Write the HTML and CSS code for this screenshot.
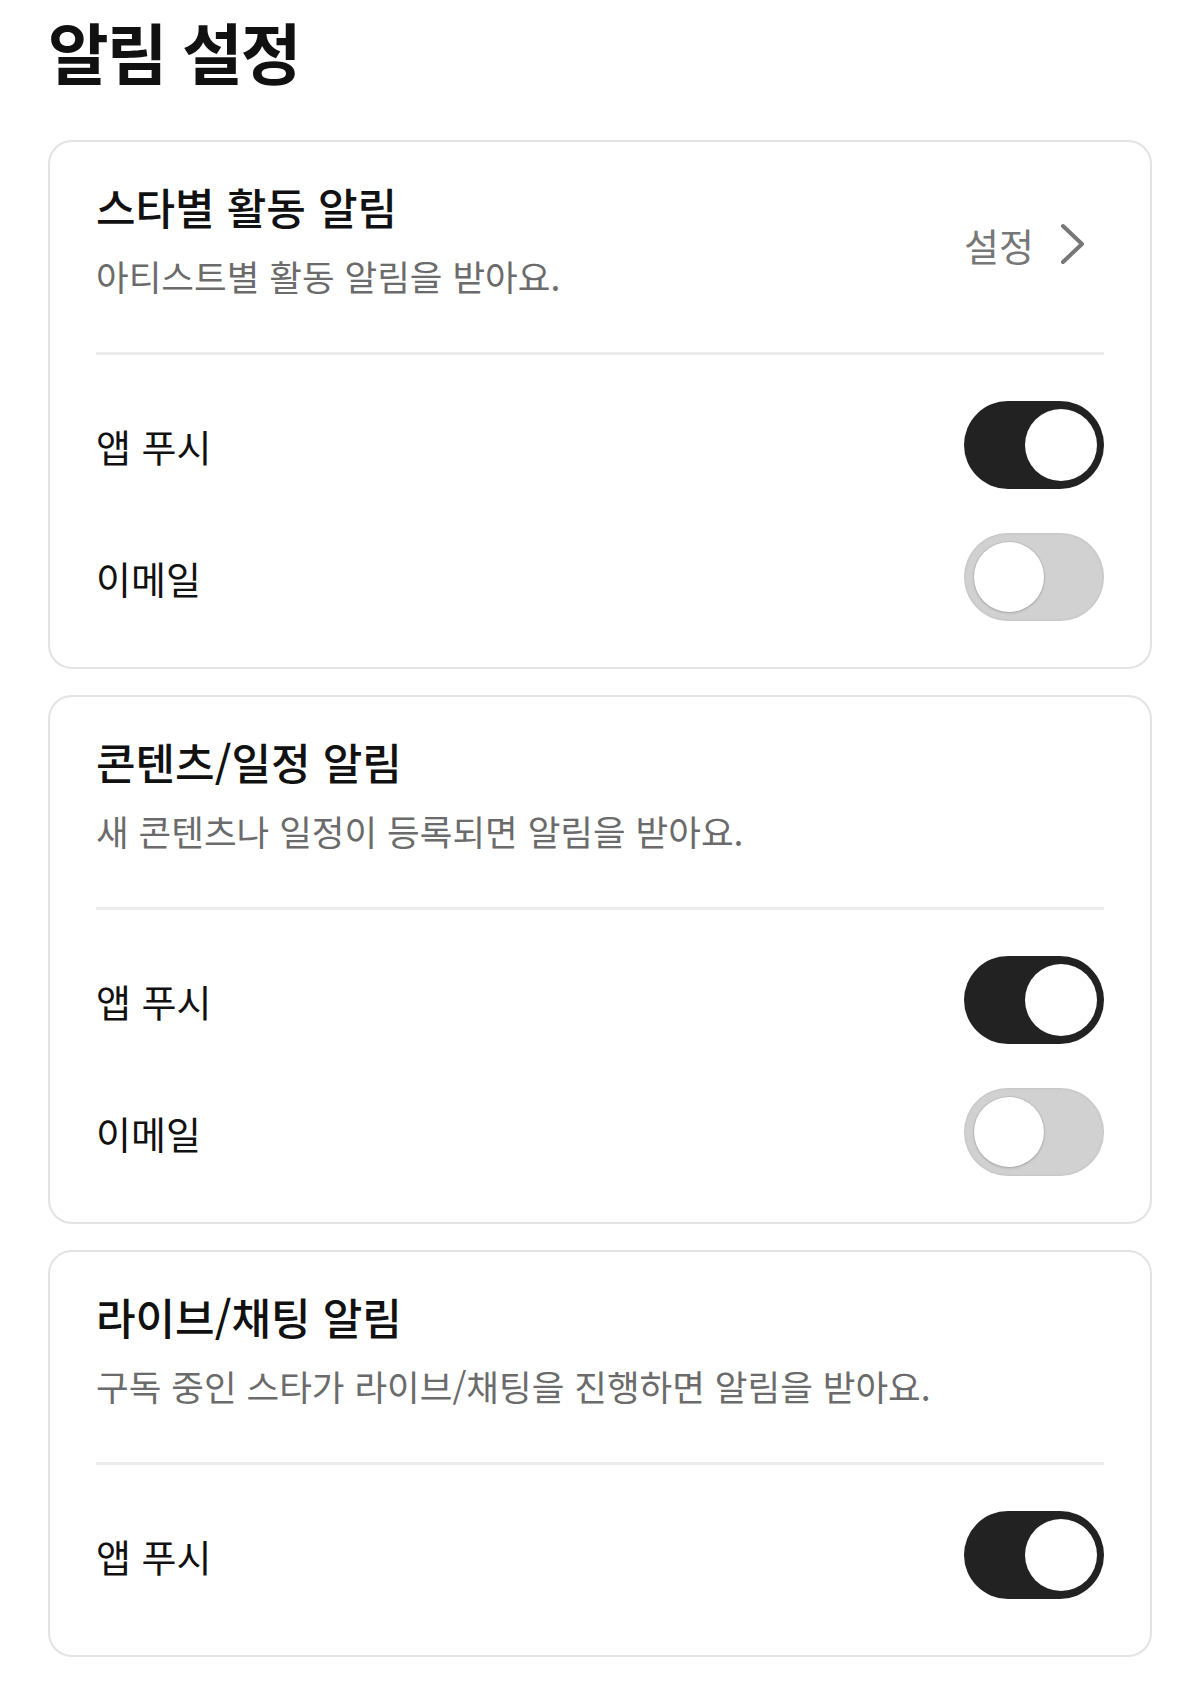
FILE: index.html
```html
<!DOCTYPE html>
<html lang="ko">

<head>
    <meta charset="UTF-8">
    <meta name="viewport" content="width=device-width, initial-scale=1.0">
    <title>알림 설정</title>
    <link rel="stylesheet" href="styles.css">
</head>

<body>

    <h1 class="page-title">알림 설정</h1>

    <section class="card">
        <div class="card-head">
            <div class="card-text">
                <h2>스타별 활동 알림</h2>
                <p>아티스트별 활동 알림을 받아요.</p>
            </div>
            <a class="head-link" href="#">
                <span>설정</span>
                <svg width="44" height="42" viewBox="0 0 44 42">
                    <path d="M3 3 L22 21 L3 39" fill="none" stroke="#777" stroke-width="4" stroke-linecap="round" stroke-linejoin="round" />
                </svg>
            </a>
        </div>
        <div class="rows">
            <div class="row">
                <span class="label">앱 푸시</span>
                <span class="toggle on"><span class="knob"></span></span>
            </div>
            <div class="row">
                <span class="label">이메일</span>
                <span class="toggle"><span class="knob"></span></span>
            </div>
        </div>
    </section>

    <section class="card">
        <div class="card-head">
            <div class="card-text">
                <h2>콘텐츠/일정 알림</h2>
                <p>새 콘텐츠나 일정이 등록되면 알림을 받아요.</p>
            </div>
        </div>
        <div class="rows">
            <div class="row">
                <span class="label">앱 푸시</span>
                <span class="toggle on"><span class="knob"></span></span>
            </div>
            <div class="row">
                <span class="label">이메일</span>
                <span class="toggle"><span class="knob"></span></span>
            </div>
        </div>
    </section>

    <section class="card">
        <div class="card-head">
            <div class="card-text">
                <h2>라이브/채팅 알림</h2>
                <p>구독 중인 스타가 라이브/채팅을 진행하면 알림을 받아요.</p>
            </div>
        </div>
        <div class="rows">
            <div class="row">
                <span class="label">앱 푸시</span>
                <span class="toggle on"><span class="knob"></span></span>
            </div>
        </div>
    </section>

    <script>
        const toggles = document.querySelectorAll(".toggle");

        toggles.forEach((toggle) => {
            toggle.addEventListener("click", () => {
                toggle.classList.toggle("on");
            });
        });
    </script>
</body>

</html>
```

FILE: styles.css
```css
* {
    margin: 0;
    padding: 0;
    box-sizing: border-box;
}

body {
    font-family: "Noto Sans CJK KR", "Noto Sans", sans-serif;
    background-color: #fff;
    color: #111;
    padding: 10px 48px 40px;
}

.page-title {
    font-size: 66px;
    line-height: 80px;
    font-weight: 700;
    letter-spacing: -2px;
    margin-bottom: 50px;
}

.card {
    border: 2px solid #e3e3e3;
    border-radius: 24px;
    padding: 0 46px;
    margin-bottom: 26px;
}

.card-head {
    display: flex;
    justify-content: space-between;
    align-items: center;
    padding: 38px 0 54px;
    border-bottom: 3px solid #ececec;
}

.card-text h2 {
    font-size: 43px;
    line-height: 52px;
    font-weight: 500;
    color: #111;
}

.card-text p {
    font-size: 35.5px;
    line-height: 44px;
    color: #6b6b6b;
    margin-top: 22px;
}

.head-link {
    display: flex;
    align-items: center;
    gap: 26px;
    margin-top: 10px;
    font-size: 38px;
    color: #777;
    text-decoration: none;
}

.rows {
    display: flex;
    flex-direction: column;
    gap: 44px;
    padding: 46px 0;
}

.card:last-of-type .rows {
    padding-bottom: 56px;
}

.row {
    display: flex;
    justify-content: space-between;
    align-items: center;
}

.label {
    font-size: 38px;
    color: #111;
}

.toggle {
    width: 140px;
    height: 88px;
    border-radius: 44px;
    background-color: #d1d1d1;
    box-shadow: inset 0 0 3px rgba(0, 0, 0, 0.12);
    display: flex;
    align-items: center;
    padding: 0 10px;
    cursor: pointer;
}

.knob {
    width: 70px;
    height: 70px;
    border-radius: 50%;
    background-color: #fff;
    box-shadow: 0 0 0 1px rgba(0, 0, 0, 0.06), 0 1px 3px rgba(0, 0, 0, 0.18);
}

.toggle.on {
    background-color: #222;
    box-shadow: none;
    justify-content: flex-end;
    padding: 0 7px;
}

.toggle.on .knob {
    width: 72px;
    height: 72px;
    box-shadow: none;
}
```
